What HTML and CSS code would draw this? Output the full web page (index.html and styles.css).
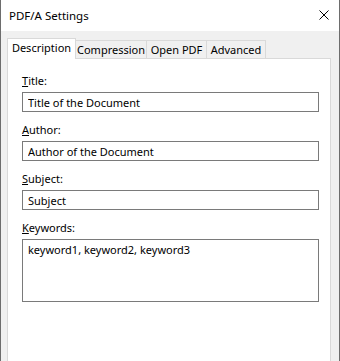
FILE: index.html
```html
<!DOCTYPE html>
<html lang="en">
<head>
    <meta charset="UTF-8">
    <title>PDF/A Settings</title>
    <link rel="stylesheet" href="styles.css">
</head>
<body>

<div class="window">
    <div class="titlebar">
        <span class="title">PDF/A Settings</span>
        <svg class="close" width="10" height="10" viewBox="0 0 10 10">
            <path d="M0.5 0.5 L9.5 9.5 M9.5 0.5 L0.5 9.5" stroke="#000" stroke-width="1" fill="none"/>
        </svg>
    </div>

    <div class="content">
        <div class="tabs">
            <div class="tab selected">Description</div>
            <div class="tab tab-compression">Compression</div>
            <div class="tab tab-open">Open PDF</div>
            <div class="tab tab-advanced">Advanced</div>
        </div>

        <div class="panel">
            <div class="field">
                <label for="title"><u>T</u>itle:</label>
                <input type="text" id="title" value="Title of the Document">
            </div>

            <div class="field">
                <label for="author"><u>A</u>uthor:</label>
                <input type="text" id="author" value="Author of the Document">
            </div>

            <div class="field">
                <label for="subject"><u>S</u>ubject:</label>
                <input type="text" id="subject" value="Subject">
            </div>

            <div class="field">
                <label for="keywords"><u>K</u>eywords:</label>
                <textarea id="keywords">keyword1, keyword2, keyword3</textarea>
            </div>
        </div>
    </div>
</div>

</body>
</html>
```

FILE: styles.css
```css
* {
    box-sizing: border-box;
}

body {
    margin: 0;
    font-family: "Noto Sans", sans-serif;
    font-size: 11px;
    color: #000;
    background-color: #fff;
}

.window {
    width: 340px;
    height: 361px;
    display: flex;
    flex-direction: column;
    border-left: 1px solid #6d6d6d;
    border-right: 1px solid #6d6d6d;
    overflow: hidden;
}

.titlebar {
    height: 31px;
    flex-shrink: 0;
    display: flex;
    align-items: center;
    justify-content: space-between;
    padding: 0 10px 0 8px;
    background-color: #fff;
}

.title {
    font-size: 11.5px;
}

.close {
    display: block;
    margin-top: -1px;
}

.content {
    flex: 1;
    display: flex;
    flex-direction: column;
    padding: 7px 8px 0 6px;
    background-color: #f0f0f0;
}

.tabs {
    display: flex;
    align-items: flex-end;
    height: 20px;
}

.tab {
    height: 18px;
    line-height: 17px;
    text-align: center;
    background-color: #f0f0f0;
    border-top: 1px solid #d9d9d9;
    border-right: 1px solid #d9d9d9;
}

.tab.selected {
    width: 69px;
    height: 21px;
    line-height: 18px;
    margin-bottom: -1px;
    position: relative;
    z-index: 1;
    background-color: #fff;
    border-left: 1px solid #d9d9d9;
}

.tab-compression {
    width: 71px;
}

.tab-open {
    width: 60px;
}

.tab-advanced {
    width: 59px;
}

.panel {
    flex: 1;
    background-color: #fff;
    border: 1px solid #d9d9d9;
    border-bottom: none;
    padding: 14px 11px 0 14px;
}

.field {
    margin-bottom: 10px;
}

label {
    display: block;
    height: 16px;
    line-height: 16px;
    margin-bottom: 3px;
}

input[type="text"], textarea {
    display: block;
    width: 100%;
    margin: 0;
    font-family: inherit;
    font-size: 11px;
    color: #000;
    border: 1px solid #7a7a7a;
    border-radius: 0;
    background-color: #fff;
    outline: none;
}

input[type="text"] {
    height: 20px;
    padding: 0 5px;
}

textarea {
    height: 63px;
    padding: 2px 5px;
    resize: none;
    overflow: hidden;
}
```
